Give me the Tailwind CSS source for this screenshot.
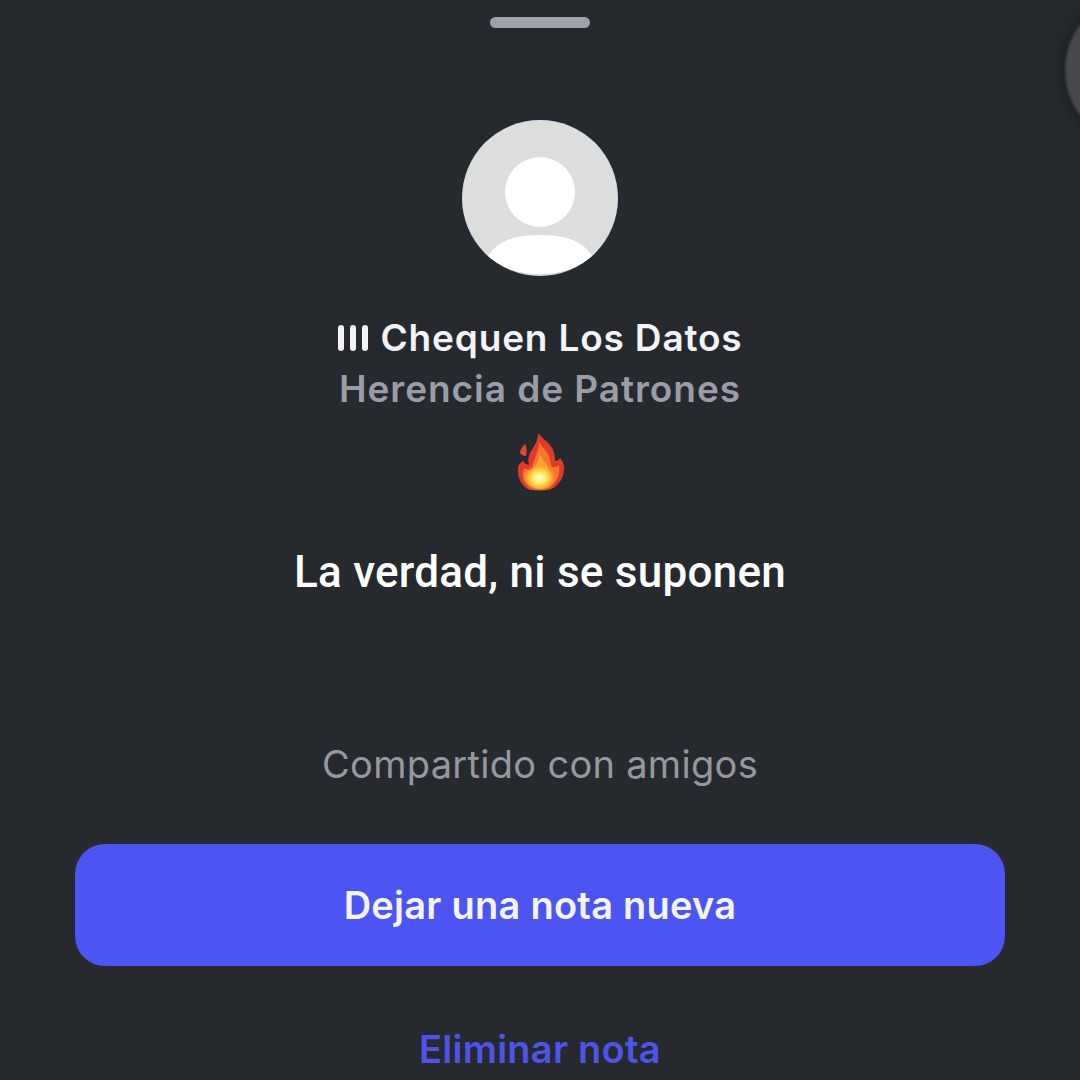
<!DOCTYPE html>
<html lang="es">
<head>
  <meta charset="UTF-8" />
  <meta name="viewport" content="width=device-width, initial-scale=1" />
  <title>Nota</title>
  <script src="https://cdn.jsdelivr.net/npm/@tailwindcss/browser@4"></script>
</head>
<body class="bg-[#26292e] overflow-hidden">
  <div class="relative w-[1080px] h-[1080px] overflow-hidden flex flex-col items-center font-['Inter','Liberation_Sans',sans-serif]">
    <!-- peek of the next avatar behind the sheet -->
    <div class="absolute left-[1065px] top-[-5px] w-[150px] h-[150px] rounded-full bg-[#46484d] blur-[1px] shadow-[0_0_14px_rgba(15,16,20,0.6)]"></div>

    <div class="mt-[17px] w-[100px] h-[11px] rounded-full bg-[#9fa2ac]"></div>

    <!-- avatar -->
    <div class="mt-[92px] w-[156px] h-[156px] rounded-full bg-[#dcdddd] overflow-hidden blur-[0.5px]">
      <svg viewBox="0 0 156 156" class="w-full h-full">
        <circle cx="78" cy="72" r="35" fill="#ffffff" />
        <path d="M26 136 C36 120 54 115 78 115 C102 115 120 120 130 136 C118 148 98 154 78 154 C58 154 38 148 26 136 Z" fill="#ffffff" />
      </svg>
    </div>

    <!-- name -->
    <div class="mt-[39px] h-[46px] flex items-center gap-[13px] text-[37px] tracking-[0.82px] font-semibold text-[#f3f4f8] leading-[46px]">
      <span class="flex gap-[6px] mb-[1px]">
        <span class="w-[6px] h-[26px] rounded-full bg-[#f3f4f8]"></span>
        <span class="w-[6px] h-[26px] rounded-full bg-[#f3f4f8]"></span>
        <span class="w-[6px] h-[26px] rounded-full bg-[#f3f4f8]"></span>
      </span>
      <span>Chequen Los Datos</span>
    </div>
    <p class="mt-[5px] h-[46px] text-[37px] tracking-[0.95px] font-semibold text-[#9a9da8] leading-[46px]">Herencia de Patrones</p>

    <!-- flame -->
    <svg viewBox="-2 0 48 58" class="mt-[21px] w-[48px] h-[58px] blur-[0.4px]">
      <defs>
        <radialGradient id="glow" cx="50%" cy="50%" r="50%">
          <stop offset="0" stop-color="#fffde0" />
          <stop offset="0.35" stop-color="#ffee70" />
          <stop offset="0.7" stop-color="#fdc02f" stop-opacity="0.8" />
          <stop offset="1" stop-color="#f9942a" stop-opacity="0" />
        </radialGradient>
      </defs>
      <path d="M7 11 C9 14 9 18 8 23 C6 23 3 22 2 20 C2 17 4 14 7 11 Z" fill="#e2452f" />
      <path d="M20 0 C24 5 29 8 32 12 C36 17 37 22 37 28 C39 28 41 27 42 25 C45 28 46 32 46 35 C46 40 45 44 43 47 C39 53 35 56 30 57 L13 57 C8 56 4 52 2 47 C0 43 0 39 0 35 C0 32 2 30 5 28 C6 30 8 31 11 32 C10 28 10 26 11 23 C12 19 14 17 15 15 C18 11 20 6 20 0 Z" fill="#e2392a" />
      <path d="M21 9 C24 14 29 18 31 23 C33 28 32 33 35 34 C38 34 40 33 41 32 C42 38 41 44 37 49 C33 54 28 56 23 56 C15 56 8 52 5 45 C4 41 5 37 7 35 C9 37 12 38 15 38 C14 33 15 29 17 25 C19 20 21 15 21 9 Z" fill="#f8762c" />
      <path d="M22 22 C25 27 30 31 31 38 C32 46 28 55 22 56 C15 56 11 50 12 43 C13 36 20 31 22 22 Z" fill="#fba132" />
      <ellipse cx="21.5" cy="45" rx="17" ry="14" fill="url(#glow)" />
    </svg>

    <p class="mt-[57px] h-[48px] text-[44px] tracking-[0.25px] font-medium text-white leading-[48px] font-['Roboto',sans-serif]">La verdad, ni se suponen</p>

    <p class="mt-[145px] h-[46px] text-[38px] tracking-[0.3px] text-[#96989f] leading-[46px]">Compartido con amigos</p>

    <button class="mt-[57px] w-[930px] h-[122px] shrink-0 rounded-[30px] bg-[#4c55f2] text-[38px] tracking-[0.25px] font-semibold text-[#f3f4f8]">Dejar una nota nueva</button>

    <button class="mt-[60px] h-[46px] shrink-0 text-[38px] tracking-[0.25px] font-semibold text-[#4c55e6] leading-[46px]">Eliminar nota</button>
  </div>
</body>
</html>
